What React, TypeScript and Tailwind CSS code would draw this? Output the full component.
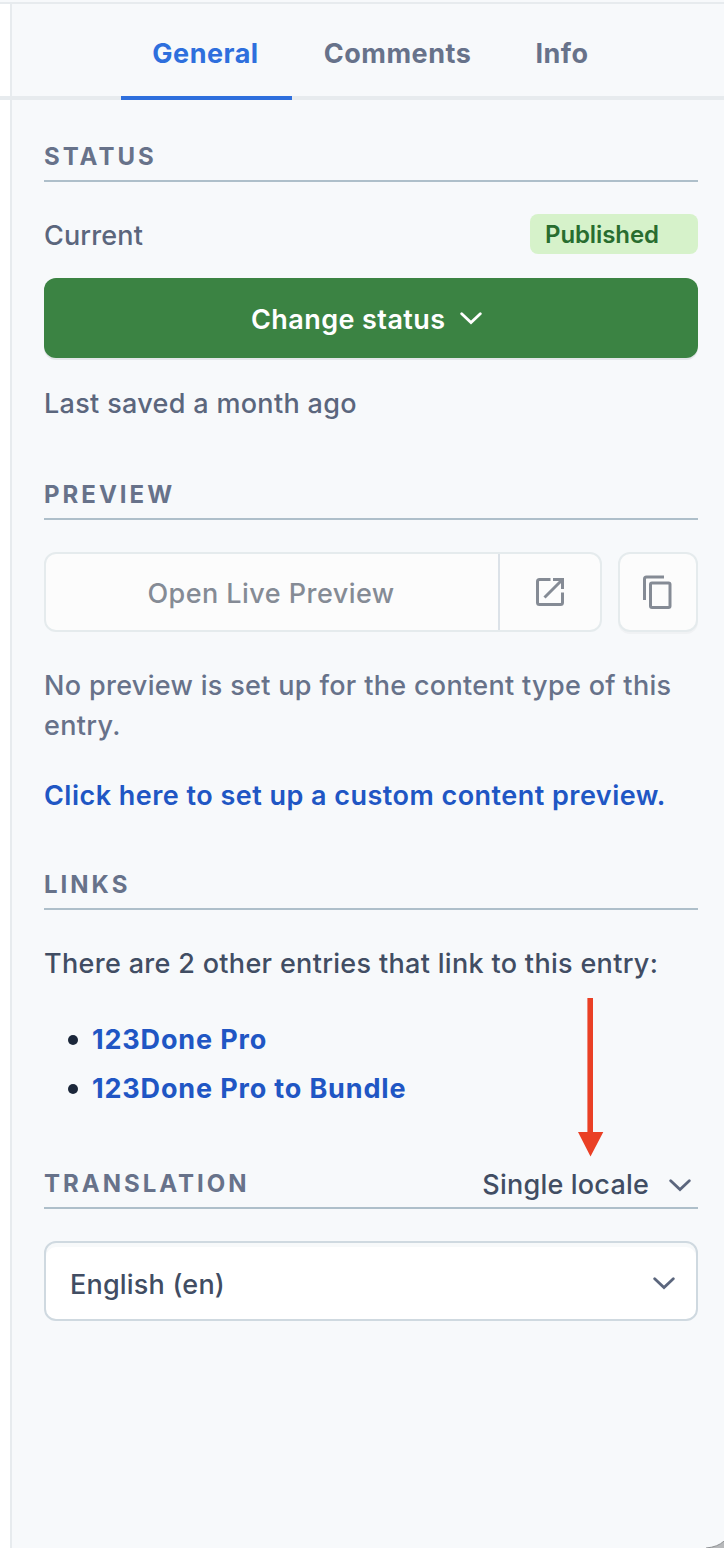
import { useState, type ReactNode } from "react";
import clsx from "clsx";

function Chevron({ className }: { className?: string }) {
  return (
    <svg viewBox="0 0 22 13" className={clsx("h-[13px] w-[22px] shrink-0", className)} fill="none">
      <path d="M1.7 1.8 L11 10.6 L20.3 1.8" stroke="currentColor" strokeWidth="2.8" strokeLinecap="round" />
    </svg>
  );
}

function SectionHeader({ title, children }: { title: string; children?: ReactNode }) {
  return (
    <div className="flex h-[50px] items-center justify-between border-b-2 border-[#aebfca] pt-[2px]">
      <h2 className="text-[24px] font-bold tracking-[3px] text-[#67728a] uppercase">{title}</h2>
      {children}
    </div>
  );
}

const tabs = [
  { name: "General", size: "w-[171px] pr-[2px]" },
  { name: "Comments", size: "w-[211px]" },
  { name: "Info", size: "w-[118px]" },
];

const links = ["123Done Pro", "123Done Pro to Bundle"];

export default function App() {
  const [active, setActive] = useState("General");
  return (
    <div className="relative flex h-[1548px] w-[724px] flex-col overflow-hidden bg-[#f7f9fb] font-['Inter',sans-serif] text-[27px] leading-[40px] font-[450] tracking-[0.32px] text-[#5b667d]">
      <div className="h-1 shrink-0 border-b-2 border-[#e7ebee]" />
      <div className="flex h-24 shrink-0">
        <div className="w-3 border-r-2 border-b-4 border-[#e7ebee] bg-white" />
        <nav className="flex flex-1">
          <div className="w-[109px] border-b-4 border-[#e7ebee]" />
          {tabs.map((tab) => (
            <button
              key={tab.name}
              onClick={() => setActive(tab.name)}
              className={clsx(
                "border-b-4 pt-2 text-center font-bold tracking-[0.5px]",
                tab.size,
                active === tab.name ? "border-[#2e6fdd] text-[#2e6fdd]" : "border-[#e7ebee] text-[#67728a]",
              )}
            >
              {tab.name}
            </button>
          ))}
          <div className="flex-1 border-b-4 border-[#e7ebee]" />
        </nav>
      </div>

      <div className="flex flex-1">
        <div className="w-3 border-r-2 border-[#e7ebee] bg-white" />
        <main className="flex-1 pt-8 pr-[26px] pl-8 whitespace-nowrap">
          <section>
            <SectionHeader title="Status" />
            <div className="mt-8 flex h-10 items-center justify-between">
              <span className="pt-[3px] tracking-[0.15px]">Current</span>
              <span className="h-10 w-[168px] rounded-lg bg-[#d6f2ca] pt-px pl-[15px] text-[24px] font-semibold tracking-[-0.1px] text-[#286d2f]">
                Published
              </span>
            </div>
            <button className="mt-6 flex h-20 w-full items-center rounded-xl bg-[#3b8343] pl-[207px] font-semibold text-white shadow-[0_2px_0_#e3e6e9]">
              <span className="pt-[3px] tracking-[0.42px]">Change status</span>
              <Chevron className="ml-[15px]" />
            </button>
            <p className="mt-[26px]">Last saved a month ago</p>
          </section>

          <section className="mt-[46px]">
            <SectionHeader title="Preview" />
            <div className="mt-8 flex gap-4">
              <div className="flex h-20 w-[558px] rounded-xl border-2 border-[#e5ebed] bg-[#fcfcfc] text-[#858b95]">
                <button className="w-[452px] pt-1 pr-[2px] text-center font-[550] tracking-[0.45px]">Open Live Preview</button>
                <button className="flex flex-1 items-center justify-center border-l-2 border-[#dce2e8]">
                  <svg viewBox="0 0 30 30" className="h-[30px] w-[30px]" fill="none" stroke="currentColor" strokeWidth="3">
                    <path d="M15.5 2.5H4.5Q2.5 2.5 2.5 4.5V25.5Q2.5 27.5 4.5 27.5H25.5Q27.5 27.5 27.5 25.5V15.5" />
                    <path d="M18 2.5H27.5V12 M26.5 3.5L9.5 20.5" />
                  </svg>
                </button>
              </div>
              <button className="flex h-20 w-20 items-center justify-center rounded-xl border-2 border-[#e5ebed] bg-[#fcfcfc] text-[#858b95] shadow-[0_2px_0_#f0f2f4]">
                <svg viewBox="0 0 30 34" className="h-[34px] w-[30px]" fill="none" stroke="currentColor" strokeWidth="3">
                  <path d="M1.5 25V4Q1.5 2 3.5 2H21" />
                  <rect x="7.5" y="8" width="19.5" height="24.5" rx="1.5" />
                </svg>
              </button>
            </div>
            <p className="mt-[34px] text-[#67728a]">
              No preview is set up for the content type of this
              <br />
              entry.
            </p>
            <a href="#" className="mt-[30px] block font-semibold tracking-[0.47px] text-[#2056c4]">
              Click here to set up a custom content preview.
            </a>
          </section>

          <section className="mt-[44px]">
            <SectionHeader title="Links" />
            <p className="mt-[34px] text-[#414d63]">There are 2 other entries that link to this entry:</p>
            <ul className="mt-9 flex flex-col gap-[9px] pl-6 font-bold tracking-[0.84px] text-[#2056c4]">
              {links.map((link) => (
                <li key={link} className="flex items-center">
                  <span className="mr-[14px] h-[10px] w-[10px] rounded-full bg-[#1b273a]" />
                  <a href="#">{link}</a>
                </li>
              ))}
            </ul>
          </section>

          <section className="mt-[50px]">
            <SectionHeader title="Translation">
              <button className="flex items-center pt-[2px] pr-[7px] text-[#414d63]">
                <span className="tracking-[0.2px]">Single locale</span>
                <Chevron className="ml-5 text-[#5b667d]" />
              </button>
            </SectionHeader>
            <button className="mt-8 flex h-20 w-full items-center justify-between rounded-xl border-2 border-[#cfd9e0] bg-white pt-1 pr-[21px] pl-6 text-[#414d63] shadow-[inset_0_4px_0_#f7f9fa]">
              <span className="pt-[3px] tracking-[0.2px]">English (en)</span>
              <Chevron className="text-[#5b667d]" />
            </button>
          </section>
        </main>
      </div>

      <svg viewBox="0 0 26 160" className="pointer-events-none absolute top-[998px] left-[578px] h-[160px] w-[26px]">
        <path d="M9.4 0H15V134H25.3L12.5 158.5L0 134H9.4Z" fill="#ea4025" />
      </svg>
      <svg viewBox="0 0 18 7" className="pointer-events-none absolute right-0 bottom-0 h-[7px] w-[18px]">
        <path d="M0 7Q12 6 18 0V7Z" fill="#b7b9bb" />
        <path d="M0 7Q12 6 18 0" fill="none" stroke="#8d8f92" />
      </svg>
    </div>
  );
}
